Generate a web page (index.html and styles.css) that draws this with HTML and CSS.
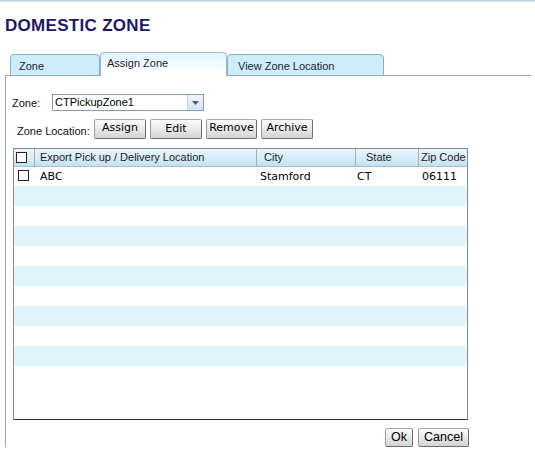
FILE: index.html
```html
<!DOCTYPE html>
<html>
<head>
<meta charset="utf-8">
<link rel="stylesheet" href="styles.css">
</head>
<body>
<div class="topline"></div>
<h1 class="title">DOMESTIC ZONE</h1>
<div class="tabs">
  <div class="tab t1">Zone</div>
  <div class="tab t2 active">Assign Zone</div>
  <div class="tab t3">View Zone Location</div>
</div>
<div class="panel">
  <div class="zone-row">
    <span class="lbl-zone">Zone:</span>
    <div class="select">
      <span class="sel-text">CTPickupZone1</span>
      <span class="sel-btn"><svg width="7" height="4" viewBox="0 0 7 4"><path d="M0 0H7L3.5 4Z" fill="#4a5f82"/></svg></span>
    </div>
  </div>
  <div class="loc-row">
    <span class="lbl-loc">Zone Location:</span>
    <div class="btns">
      <button class="btn b-assign">Assign</button>
      <button class="btn b-edit">Edit</button>
      <button class="btn b-remove">Remove</button>
      <button class="btn b-archive">Archive</button>
    </div>
  </div>
  <div class="grid">
    <div class="ghead">
      <div class="c c1"><span class="cb"></span></div>
      <div class="c c2">Export Pick up / Delivery Location</div>
      <div class="c c3">City</div>
      <div class="c c4">State</div>
      <div class="c c5">Zip Code</div>
    </div>
    <div class="grow first">
      <div class="c c1"><span class="cb"></span></div>
      <div class="c c2">ABC</div>
      <div class="c c3">Stamford</div>
      <div class="c c4">CT</div>
      <div class="c c5">06111</div>
    </div>
    <div class="grow stripe"></div>
    <div class="grow"></div>
    <div class="grow stripe"></div>
    <div class="grow"></div>
    <div class="grow stripe"></div>
    <div class="grow"></div>
    <div class="grow stripe"></div>
    <div class="grow"></div>
    <div class="grow stripe"></div>
  </div>
  <div class="actions">
    <button class="btn2 ok">Ok</button>
    <button class="btn2 cancel">Cancel</button>
  </div>
</div>
</body>
</html>
```
FILE: styles.css
```css
* { box-sizing: border-box; }
html, body { margin: 0; padding: 0; background: #fff; }
body { font-family: "Liberation Sans", Arial, sans-serif; color: #000; width: 535px; height: 453px; overflow: hidden; }

.topline { height: 2px; background: linear-gradient(#aecbdc, #e3eef5); }

.title {
  margin: 14px 0 0 5px;
  font-size: 17px;
  line-height: 20px;
  font-weight: bold;
  letter-spacing: 0.3px;
  color: #1b1a6a;
}

.tabs {
  margin: 17px 0 0 10px;
  height: 23px;
  display: flex;
  align-items: flex-end;
  position: relative;
  z-index: 1;
  margin-bottom: -1px;
}
.tab {
  height: 21px;
  border: 1px solid #8eaebd;
  border-bottom: none;
  border-radius: 4px 4px 0 0;
  background: #ccedf9;
  font-size: 11px;
  line-height: 22px;
  color: #1b2633;
}
.t1 { width: 90px; padding-left: 8px; }
.t2 { width: 127px; padding-left: 6px; }
.t3 { width: 157px; padding-left: 10px; border-bottom: 1px solid #8eaebd; height: 22px; }
.t1 { border-bottom: 1px solid #8eaebd; height: 22px; }
.tab.active {
  height: 24px;
  line-height: 20px;
  background: linear-gradient(#dff3fb, #ffffff 80%);
  border-color: #9fbccb;
}

.panel {
  margin-left: 5px;
  margin-right: 4px;
  height: 372px;
  border-top: 1px solid #8fa6b3;
  border-left: 1px solid #9ba4aa;
}

.zone-row {
  margin-top: 18px;
  height: 17px;
  display: flex;
  align-items: center;
  padding-left: 6px;
  font-size: 11px;
}
.lbl-zone { width: 40px; color: #111; }
.select {
  width: 152px;
  height: 17px;
  border: 1px solid #7f9db9;
  display: flex;
  align-items: center;
  justify-content: space-between;
  background: #fff;
}
.sel-text { padding-left: 2px; font-size: 11px; line-height: 15px; }
.sel-btn {
  width: 16px;
  height: 15px;
  background: linear-gradient(#f1f5fb, #d7e2f0);
  border-left: 1px solid #c2d2e4;
  display: flex;
  align-items: center;
  justify-content: center;
}

.loc-row {
  margin-top: 8px;
  height: 20px;
  display: flex;
  align-items: center;
  padding-left: 11px;
}
.lbl-loc { width: 77px; font-size: 11px; padding-top: 4px; color: #111; }
.btns { display: flex; gap: 4px; }
.btn {
  height: 20px;
  padding: 0;
  font-family: "DejaVu Sans", Verdana, sans-serif;
  font-size: 11px;
  line-height: 16px;
  color: #000;
  background: linear-gradient(#fbfbfb, #e6e6e6 60%, #d2d2d2);
  border: 1px solid #6e6e6e;
  border-top-color: #a8a8a8;
  border-left-color: #9a9a9a;
  border-radius: 2px;
}
.b-assign { width: 52px; padding-bottom: 3px; }
.b-edit { width: 52px; }
.b-remove { width: 51px; padding-bottom: 2px; }
.b-archive { width: 52px; padding-bottom: 2px; }

.grid {
  margin: 9px 0 0 7px;
  width: 455px;
  height: 272px;
  border: 1px solid #838d93;
  border-bottom-color: #25383a;
  background: #fff;
  overflow: hidden;
}
.ghead, .grow { display: flex; }
.ghead {
  height: 18px;
  background: linear-gradient(#eaf5fc, #d2e9f6 70%, #c3e0f1);
  border-bottom: 1px solid #a7bfcd;
  font-size: 11px;
  line-height: 17px;
  color: #1a1a1a;
}
.ghead .c { border-right: 1px solid #98b2c2; }
.ghead .c5 { border-right: none; }
.c1 { width: 21px; display: flex; align-items: center; }
.c2 { width: 222px; padding-left: 5px; }
.c3 { width: 99px; }
.c4 { width: 63px; }
.c5 { width: 48px; }
.ghead .c3 { padding-left: 7px; }
.ghead .c4 { padding-left: 10px; }
.ghead .c5 { padding-left: 2px; }
.ghead .c1 { padding-left: 2px; }

.cb { display: block; width: 11px; height: 11px; border: 1px solid #222; background: #fff; }

.grow { height: 20px; }
.grow.first {
  height: 19px;
  font-family: "DejaVu Sans", Verdana, sans-serif;
  font-size: 11px;
  line-height: 19px;
}
.grow.first .c1 { padding-left: 4px; padding-bottom: 2px; }
.grow.first .c3 { padding-left: 3px; }
.grow.first .c4 { padding-left: 1px; }
.grow.first .c5 { padding-left: 3px; }
.grow.stripe { background: #e1f5fd; }

.actions {
  margin-top: 8px;
  padding-left: 379px;
  display: flex;
  gap: 5px;
}
.btn2 {
  height: 19px;
  padding: 0;
  font-family: "Liberation Sans", Arial, sans-serif;
  font-size: 12.5px;
  line-height: 15px;
  color: #000;
  background: linear-gradient(#fbfbfb, #e6e6e6 60%, #d2d2d2);
  border: 1px solid #6e6e6e;
  border-top-color: #a8a8a8;
  border-left-color: #9a9a9a;
  border-radius: 2px;
}
.ok { width: 28px; }
.cancel { width: 51px; }
```
